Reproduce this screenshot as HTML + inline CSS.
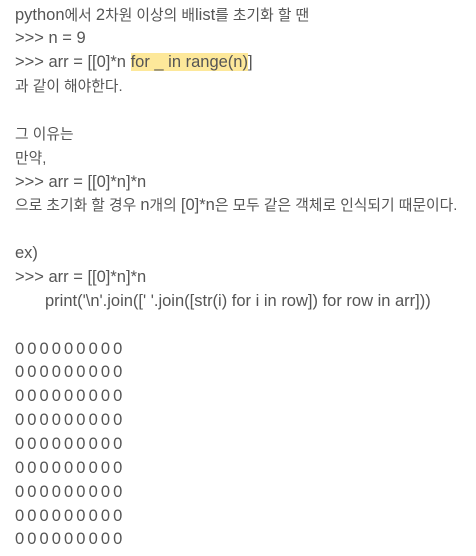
<!DOCTYPE html>
<html><head><meta charset="utf-8"><style>
html,body{margin:0;padding:0;background:#fff;width:476px;height:556px;overflow:hidden}
.c{position:absolute;left:15px;top:3.5px;font-family:"Liberation Sans","Noto Sans CJK KR",sans-serif;font-size:16.5px;line-height:23.86px;color:#555;white-space:pre}
.c div{height:23.86px;line-height:23.86px}
.k{font-size:14.8px;line-height:1}
.h{background:#fde89a}
.z{letter-spacing:-0.75px}
</style></head><body><div class="c"><div>python<span class="k">에서 </span>2<span class="k">차원 이상의 배</span>list<span class="k">를 초기화 할 땐</span></div><div>&gt;&gt;&gt; n = 9</div><div>&gt;&gt;&gt; arr = [[0]*n <span class="h">for _ in range(n)</span>]</div><div><span class="k">과 같이 해야한다.</span></div><div></div><div><span class="k">그 이유는</span></div><div><span class="k">만약,</span></div><div>&gt;&gt;&gt; arr = [[0]*n]*n</div><div><span class="k">으로 초기화 할 경우 </span>n<span class="k">개의 </span>[0]*n<span class="k">은 모두 같은 객체로 인식되기 때문이다.</span></div><div></div><div>ex)</div><div>&gt;&gt;&gt; arr = [[0]*n]*n</div><div><span style="padding-left:30px">print('\n'.join([' '.join([str(i) for i in row]) for row in arr]))</span></div><div></div><div class="z">0 0 0 0 0 0 0 0 0</div><div class="z">0 0 0 0 0 0 0 0 0</div><div class="z">0 0 0 0 0 0 0 0 0</div><div class="z">0 0 0 0 0 0 0 0 0</div><div class="z">0 0 0 0 0 0 0 0 0</div><div class="z">0 0 0 0 0 0 0 0 0</div><div class="z">0 0 0 0 0 0 0 0 0</div><div class="z">0 0 0 0 0 0 0 0 0</div><div class="z">0 0 0 0 0 0 0 0 0</div></div></body></html>
